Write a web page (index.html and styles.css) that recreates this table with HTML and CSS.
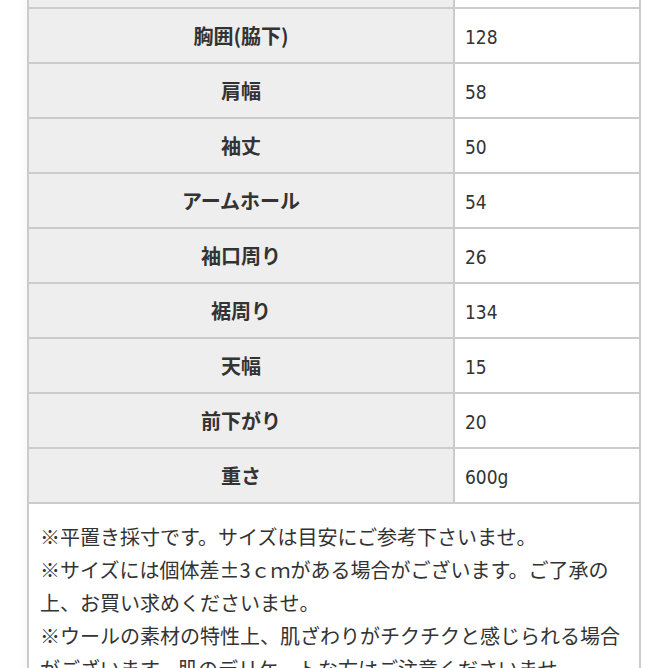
FILE: index.html
```html
<!DOCTYPE html>
<html lang="ja">
<head>
<meta charset="utf-8">
<link rel="stylesheet" href="styles.css">
</head>
<body>
<div class="sheet">
  <div class="row"><div class="label"></div><div class="value"></div></div>
  <div class="row"><div class="label">胸囲(脇下)</div><div class="value">128</div></div>
  <div class="row"><div class="label">肩幅</div><div class="value">58</div></div>
  <div class="row"><div class="label">袖丈</div><div class="value">50</div></div>
  <div class="row"><div class="label">アームホール</div><div class="value">54</div></div>
  <div class="row"><div class="label">袖口周り</div><div class="value">26</div></div>
  <div class="row"><div class="label">裾周り</div><div class="value">134</div></div>
  <div class="row"><div class="label">天幅</div><div class="value">15</div></div>
  <div class="row"><div class="label">前下がり</div><div class="value">20</div></div>
  <div class="row"><div class="label">重さ</div><div class="value">600g</div></div>
  <div class="notes">
    <p>※平置き採寸です。サイズは目安にご参考下さいませ。</p>
    <p>※サイズには個体差±3ｃｍがある場合がございます。ご了承の上、お買い求めくださいませ。</p>
    <p>※ウールの素材の特性上、肌ざわりがチクチクと感じられる場合がございます。肌のデリケートな方はご注意くださいませ。</p>
  </div>
</div>
</body>
</html>
```
FILE: styles.css
```css
html, body {
  margin: 0;
  padding: 0;
  background: #ffffff;
  height: 668px;
  overflow: hidden;
}
.sheet {
  margin: -46px 0 0 27px;
  width: 614px;
  box-sizing: border-box;
  border-left: 2px solid #cbcbcb;
  border-right: 2px solid #cbcbcb;
  box-shadow: -6px 0 10px -6px rgba(0,0,0,0.06);
  background: #fff;
}
.row {
  display: grid;
  grid-template-columns: 426px 1fr;
  height: 55px;
  box-sizing: border-box;
  border-bottom: 2px solid #cbcbcb;
}
.label {
  background: #eeeeee;
  border-right: 2px solid #cbcbcb;
  display: flex;
  align-items: center;
  justify-content: center;
  font-family: "Noto Sans CJK JP", sans-serif;
  font-weight: 700;
  font-size: 20px;
  color: #333333;
}
.value {
  display: flex;
  align-items: center;
  padding-left: 10px;
  padding-top: 2px;
  font-family: "DejaVu Sans Condensed", "Liberation Sans Narrow", "Liberation Sans", sans-serif;
  font-stretch: condensed;
  font-size: 19px;
  color: #333333;
}
.notes {
  padding: 16px 11px 0 11px;
  font-family: "Noto Sans CJK JP", sans-serif;
  font-size: 20px;
  line-height: 33px;
  color: #333333;
}
.notes p {
  margin: 0;
}
```
